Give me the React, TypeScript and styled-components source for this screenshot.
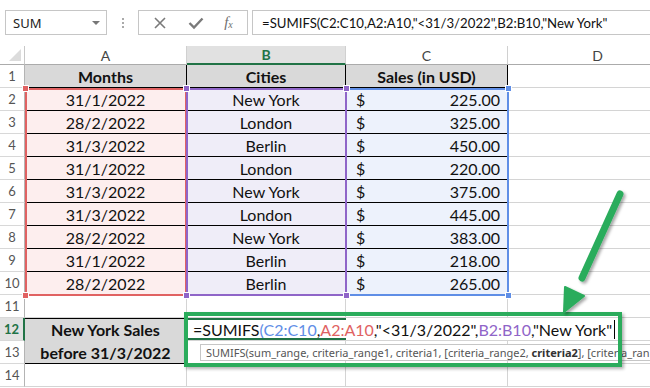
import * as React from 'react';
import styled, { createGlobalStyle, css } from 'styled-components';

const GlobalStyle = createGlobalStyle`
  body {
    margin: 0;
    background: #ffffff;
    font-family: Lato, "Liberation Sans", sans-serif;
  }
`;

const RED = '#e06262';
const PURPLE = '#8f65c8';
const BLUE = '#5f8ee6';
const GREEN = '#2bac5c';
const DARK_GREEN = '#217346';

const data = [
  ['31/1/2022', 'New York', '225.00'],
  ['28/2/2022', 'London', '325.00'],
  ['31/3/2022', 'Berlin', '450.00'],
  ['31/1/2022', 'London', '220.00'],
  ['31/3/2022', 'New York', '375.00'],
  ['31/3/2022', 'London', '445.00'],
  ['28/2/2022', 'New York', '383.00'],
  ['31/1/2022', 'Berlin', '218.00'],
  ['28/2/2022', 'Berlin', '265.00'],
];

type Fill = 'none' | 'head' | 'pink' | 'lilac' | 'blue';
const fills: Record<Fill, string> = {
  none: '#ffffff',
  head: '#d9d9d9',
  pink: '#fdeeee',
  lilac: '#efedf8',
  blue: '#edf2fc',
};

export default function App() {
  return (
    <>
      <GlobalStyle />
      <Page>
        <TopBar>
          <NameBox>
            SUM
            <Caret />
          </NameBox>
          <Grip>
            <i /><i /><i />
          </Grip>
          <ToolBox>
            <svg width="14" height="14" viewBox="0 0 14 14">
              <path d="M2 2 L12 12 M12 2 L2 12" stroke="#7a7a7a" strokeWidth="1.6" />
            </svg>
            <svg width="16" height="14" viewBox="0 0 16 14">
              <path d="M1.5 7 L6 11.5 L14.5 2.5" stroke="#7a7a7a" strokeWidth="2.4" fill="none" />
            </svg>
            <Fx>f<sub>x</sub></Fx>
          </ToolBox>
          <FormulaInput>=SUMIFS(C2:C10,A2:A10,"&lt;31/3/2022",B2:B10,"New York"</FormulaInput>
        </TopBar>

        <Sheet>
          <Corner />
          <ColHead>A</ColHead>
          <ColHead $active>B</ColHead>
          <ColHead>C</ColHead>
          <ColHead>D</ColHead>

          <RowHead>1</RowHead>
          <Cell $fill="head" $bold $table>Months</Cell>
          <Cell $fill="head" $bold $table>Cities</Cell>
          <Cell $fill="head" $bold $table>Sales (in USD)</Cell>
          <Cell />

          {data.map((r, i) => (
            <React.Fragment key={i}>
              <RowHead>{i + 2}</RowHead>
              <Cell $fill="pink" $table>{r[0]}</Cell>
              <Cell $fill="lilac" $table>{r[1]}</Cell>
              <Cell $fill="blue" $table $money>
                <span>$</span>
                <span>{r[2]}</span>
              </Cell>
              <Cell />
            </React.Fragment>
          ))}

          <RowHead>11</RowHead>
          <Cell />
          <Cell />
          <Cell />
          <Cell />

          <RowHead $active>12</RowHead>
          <Merged>
            New York Sales
            <br />
            before 31/3/2022
          </Merged>
          <EditCell>
            =SUMIFS<Ref $c={BLUE}>(C2:C10</Ref>,<Ref $c={RED}>A2:A10</Ref>,"&lt;31/3/2022",
            <Ref $c={PURPLE}>B2:B10</Ref>,"New York"<Cursor />
          </EditCell>

          <RowHead>13</RowHead>
          <Cell />
          <Cell />
          <Cell />

          <RowHead>14</RowHead>
          <Cell />
          <Cell />
          <Cell />
          <Cell />

          <RangeBox $c={RED} $x={25} $y={42} $w={162} $h={208}>
            <Handle $c={RED} $pos="tl" /><Handle $c={RED} $pos="bl" />
          </RangeBox>
          <RangeBox $c={BLUE} $x={345} $y={42} $w={164} $h={208}>
            <Handle $c={BLUE} $pos="tr" /><Handle $c={BLUE} $pos="br" />
          </RangeBox>
          <RangeBox $c={PURPLE} $x={186} $y={42} $w={161} $h={208}>
            <Handle $c={PURPLE} $pos="tl" /><Handle $c={PURPLE} $pos="bl" />
            <Handle $c={PURPLE} $pos="tr" /><Handle $c={PURPLE} $pos="br" />
          </RangeBox>

          <Tip>
            SUMIFS(sum_range, criteria_range1, criteria1, [criteria_range2, <b>criteria2</b>], [criteria_ran
          </Tip>

          <Highlight />

          <Arrow width="100" height="130" viewBox="0 0 100 130">
            <defs>
              <filter id="sh" x="-30%" y="-30%" width="160%" height="160%">
                <feDropShadow dx="2" dy="2" stdDeviation="1.5" floodColor="#000" floodOpacity="0.35" />
              </filter>
            </defs>
            <g filter="url(#sh)">
              <path d="M80 12 L42 96" stroke={GREEN} strokeWidth="7" strokeLinecap="round" />
              <path d="M24 130 L25 105 L44 114 Z" fill={GREEN} stroke={GREEN} strokeWidth="2" strokeLinejoin="round" />
            </g>
          </Arrow>
        </Sheet>
      </Page>
    </>
  );
}

// STYLE
const Page = styled.div`
  width: 650px;
  height: 388px;
  overflow: hidden;
  background: #ffffff;
`;

const TopBar = styled.div`
  display: flex;
  align-items: center;
  height: 46px;
  box-sizing: border-box;
  padding: 10px 0 11px 5px;
`;

const boxLine = css`
  height: 25px;
  box-sizing: border-box;
  border: 1px solid #c6c6c6;
  display: flex;
  align-items: center;
`;

const NameBox = styled.div`
  ${boxLine};
  width: 102px;
  padding: 0 6px 0 7px;
  justify-content: space-between;
  font-family: "Noto Sans", sans-serif;
  font-size: 13px;
  color: #222;
`;

const Caret = styled.span`
  width: 0;
  height: 0;
  border-left: 4px solid transparent;
  border-right: 4px solid transparent;
  border-top: 4px solid #777;
`;

const Grip = styled.div`
  width: 31px;
  display: flex;
  flex-direction: column;
  align-items: center;
  gap: 2px;

  i {
    width: 2px;
    height: 2px;
    background: #aaa;
  }
`;

const ToolBox = styled.div`
  ${boxLine};
  width: 110px;
  justify-content: space-around;
  padding: 0 4px;
`;

const Fx = styled.span`
  font-family: "Liberation Serif", serif;
  font-style: italic;
  font-size: 15px;
  color: #6f6f6f;
  sub {
    font-size: 10px;
    vertical-align: -1px;
  }
`;

const FormulaInput = styled.div`
  ${boxLine};
  flex: 1;
  margin-left: 4px;
  border-right: none;
  padding-left: 9px;
  font-family: Lato, sans-serif;
  font-size: 13.2px;
  color: #111;
  white-space: nowrap;
`;

const Sheet = styled.div`
  position: relative;
  display: grid;
  grid-template-columns: 25px 162px 159px 162px 180px;
  grid-template-rows: 19px repeat(14, 23px);
`;

const Corner = styled.div`
  position: relative;
  border-right: 1px solid #c8c8c8;
  border-bottom: 1px solid #ababab;
  &::after {
    content: '';
    position: absolute;
    right: 3px;
    bottom: 3px;
    border-left: 12px solid transparent;
    border-bottom: 12px solid #dcdcdc;
  }
`;

const ColHead = styled.div<{ $active?: boolean }>`
  display: flex;
  align-items: center;
  justify-content: center;
  box-sizing: border-box;
  border-right: 1px solid #d0d0d0;
  border-bottom: 1px solid #ababab;
  font-size: 14px;
  color: #444;
  ${(p) =>
    p.$active &&
    css`
      background: #e1e1e1;
      color: ${DARK_GREEN};
      font-weight: 700;
      border-bottom: 2px solid ${DARK_GREEN};
    `}
`;

const RowHead = styled.div<{ $active?: boolean }>`
  display: flex;
  align-items: center;
  justify-content: center;
  box-sizing: border-box;
  border-right: 1px solid #b4b4b4;
  border-bottom: 1px solid #d8d8d8;
  font-size: 13px;
  color: #555;
  ${(p) =>
    p.$active &&
    css`
      background: #e1e1e1;
      color: ${DARK_GREEN};
      font-weight: 700;
      border-right: 2px solid ${DARK_GREEN};
    `}
`;

const Cell = styled.div<{ $fill?: Fill; $bold?: boolean; $table?: boolean; $money?: boolean }>`
  display: flex;
  align-items: center;
  justify-content: ${(p) => (p.$money ? 'space-between' : 'center')};
  padding: ${(p) => (p.$money ? '0 7px 0 10px' : '0')};
  box-sizing: border-box;
  background: ${(p) => fills[p.$fill || 'none']};
  border-right: 1px solid ${(p) => (p.$table ? '#000' : '#d4d4d4')};
  border-bottom: 1px solid ${(p) => (p.$table ? '#000' : '#d4d4d4')};
  font-size: 16px;
  font-weight: ${(p) => (p.$bold ? 700 : 400)};
  color: #111;
  white-space: nowrap;
`;

const Merged = styled.div`
  grid-row: span 2;
  display: flex;
  align-items: center;
  justify-content: center;
  text-align: center;
  box-sizing: border-box;
  background: #d9d9d9;
  border-top: 1px solid #000;
  border-right: 1px solid #000;
  border-bottom: 1px solid #000;
  font-size: 16px;
  font-weight: 700;
  line-height: 23px;
  color: #111;
`;

const EditCell = styled.div`
  position: relative;
  grid-column: span 3;
  display: flex;
  align-items: center;
  box-sizing: border-box;
  padding-left: 6px;
  background: linear-gradient(to right, #ffffff 420px, transparent 420px);
  border-bottom: 1px solid #d4d4d4;
  font-size: 16px;
  color: #111;
  white-space: pre;

  &::before {
    content: '';
    position: absolute;
    left: 0;
    top: 0;
    width: 159px;
    height: 22px;
    box-sizing: border-box;
    border-top: 2px solid ${DARK_GREEN};
    border-bottom: 2px solid ${DARK_GREEN};
  }
`;

const Ref = styled.span<{ $c: string }>`
  color: ${(p) => p.$c};
`;

const Cursor = styled.span`
  width: 1px;
  height: 19px;
  margin-left: 2px;
  background: #000;
`;

const RangeBox = styled.div<{ $c: string; $x: number; $y: number; $w: number; $h: number }>`
  position: absolute;
  left: ${(p) => p.$x}px;
  top: ${(p) => p.$y}px;
  width: ${(p) => p.$w}px;
  height: ${(p) => p.$h}px;
  box-sizing: border-box;
  border: 2px solid ${(p) => p.$c};
  pointer-events: none;
`;

const Handle = styled.span<{ $c: string; $pos: 'tl' | 'tr' | 'bl' | 'br' }>`
  position: absolute;
  width: 5px;
  height: 5px;
  background: ${(p) => p.$c};
  outline: 1px solid #fff;
  ${(p) => (p.$pos[0] === 't' ? 'top: -4px;' : 'bottom: -4px;')}
  ${(p) => (p.$pos[1] === 'l' ? 'left: -4px;' : 'right: -4px;')}
`;

const Tip = styled.div`
  position: absolute;
  left: 200px;
  top: 298px;
  right: 0;
  height: 17px;
  padding: 0 5px;
  box-sizing: border-box;
  display: flex;
  align-items: center;
  overflow: hidden;
  background: #ffffff;
  border: 1px solid #c6c6c6;
  border-right: none;
  font-family: "Noto Sans", sans-serif;
  font-size: 11px;
  color: #555;
  white-space: pre;

  b {
    color: #333;
  }
`;

const Highlight = styled.div`
  position: absolute;
  left: 184px;
  top: 266px;
  width: 438px;
  height: 55px;
  box-sizing: border-box;
  border: 4px solid ${GREEN};
  box-shadow: 2px 2px 3px rgba(0, 0, 0, 0.3);
  pointer-events: none;
`;

const Arrow = styled.svg`
  position: absolute;
  left: 540px;
  top: 136px;
  overflow: visible;
`;
